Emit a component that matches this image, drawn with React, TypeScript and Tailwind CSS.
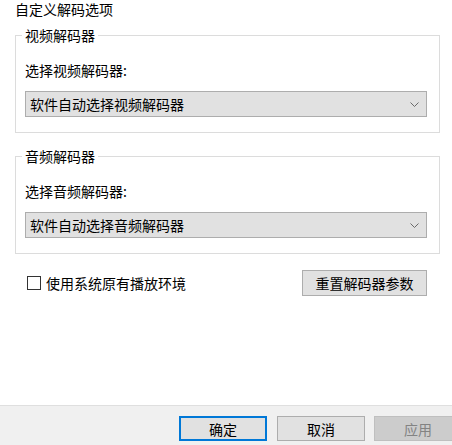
import React from "react";

const Chevron = () => (
  <svg width="9" height="5" viewBox="0 0 9 5" className="shrink-0">
    <path d="M0.5 0.5 L4.5 4.5 L8.5 0.5" fill="none" stroke="#6a6a6a" strokeWidth="1" />
  </svg>
);

function Group({ title, label, value }: { title: string; label: string; value: string }) {
  return (
    <div className="relative ml-[15px] w-[425px] h-[98px] border border-[#dcdcdc]">
      <span className="absolute left-[6px] top-[-9px] px-[3px] bg-white leading-[16px]">{title}</span>
      <div className="pl-[9px] pt-[26px]">
        <div className="leading-[16px]">{label}</div>
        <div className="mt-[13px] w-[402px] h-[26px] border border-[#adadad] bg-[#e1e1e1] flex items-center justify-between pl-[4px] pr-[7px]">
          <span className="leading-[16px]">{value}</span>
          <Chevron />
        </div>
      </div>
    </div>
  );
}

export default function App() {
  return (
    <div
      className="w-[452px] h-[445px] bg-white text-black text-[14px] flex flex-col overflow-hidden"
      style={{ fontFamily: '"Noto Sans CJK SC", "Noto Sans", sans-serif' }}
    >
      <div className="pl-[15px] h-[17px] pt-[1px] leading-[16px]">自定义解码选项</div>
      <div className="mt-[18px]">
        <Group title="视频解码器" label="选择视频解码器:" value="软件自动选择视频解码器" />
      </div>
      <div className="mt-[23px]">
        <Group title="音频解码器" label="选择音频解码器:" value="软件自动选择音频解码器" />
      </div>
      <div className="mt-[16px] flex items-center justify-between pl-[27px] pr-[25px]">
        <div className="flex items-center gap-[5px]">
          <div className="w-[14px] h-[14px] border border-[#333333] bg-white" />
          <span className="leading-[16px]">使用系统原有播放环境</span>
        </div>
        <div className="w-[125px] h-[26px] border border-[#adadad] bg-[#e1e1e1] flex items-center justify-center leading-[16px]">
          重置解码器参数
        </div>
      </div>
      <div className="mt-auto h-[40px] border-t border-[#dfdfdf] bg-[#f0f0f0] flex items-start pt-[10px] pl-[179px]">
        <div className="w-[88px] h-[25px] shrink-0 border-2 border-[#0078d7] bg-[#e1e1e1] flex items-center justify-center leading-[16px]">
          确定
        </div>
        <div className="ml-[10px] w-[88px] h-[25px] shrink-0 border border-[#adadad] bg-[#e1e1e1] flex items-center justify-center leading-[16px]">
          取消
        </div>
        <div className="ml-[9px] w-[88px] h-[25px] shrink-0 border border-[#bfbfbf] bg-[#cccccc] text-[#838383] flex items-center justify-center leading-[16px]">
          应用
        </div>
      </div>
    </div>
  );
}
